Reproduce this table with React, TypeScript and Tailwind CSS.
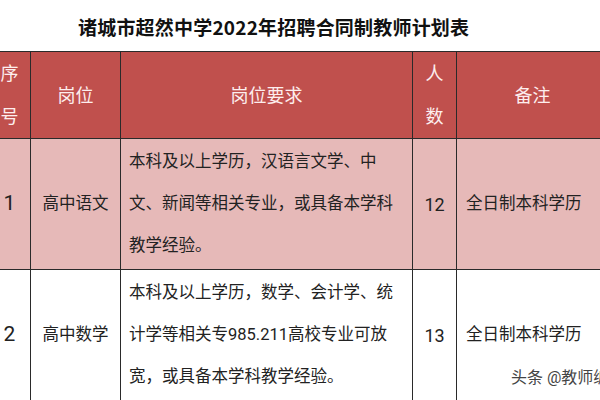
import React from "react";

const body = "font-['Roboto','Noto_Sans_CJK_SC',sans-serif]";

export default function App() {
  const cell = "border-r border-b border-[#2a2a2a]";
  return (
    <div className={`relative w-[600px] h-[400px] overflow-hidden bg-white ${body}`}>
      <div className="h-[51px] pl-[78px] flex items-center pt-[3px]">
        <span className="text-[19px] font-bold text-[#111] font-['Noto_Sans_CJK_SC',sans-serif] tracking-[0.2px]">
          诸城市超然中学2022年招聘合同制教师计划表
        </span>
      </div>
      <div className="-ml-[11px] w-[620px] border-t border-[#2a2a2a] grid grid-cols-[42px_90px_292px_44px_152px]">
        {/* header */}
        <div className={`${cell} bg-[#c0504d] h-[87px] flex flex-col items-center justify-center text-[18px] leading-[43px] text-[#fdeeee]`}>
          <span>序</span>
          <span>号</span>
        </div>
        <div className={`${cell} bg-[#c0504d] flex items-center justify-center text-[18px] text-[#fdeeee]`}>岗位</div>
        <div className={`${cell} bg-[#c0504d] flex items-center justify-center text-[18px] text-[#fdeeee]`}>岗位要求</div>
        <div className={`${cell} bg-[#c0504d] flex flex-col items-center justify-center text-[18px] leading-[43px] text-[#fdeeee]`}>
          <span>人</span>
          <span>数</span>
        </div>
        <div className={`${cell} bg-[#c0504d] flex items-center justify-center text-[18px] text-[#fdeeee]`}>备注</div>

        {/* row 1 */}
        <div className={`${cell} bg-[#e6b9b8] h-[131px] flex items-center justify-center text-[21px] text-[#222]`}>1</div>
        <div className={`${cell} bg-[#e6b9b8] flex items-center justify-center text-[16.5px] text-[#222]`}>高中语文</div>
        <div className={`${cell} bg-[#e6b9b8] flex flex-col justify-center pl-[8px] text-[16.5px] leading-[42px] text-[#222] whitespace-nowrap`}>
          <span>本科及以上学历，汉语言文学、中</span>
          <span>文、新闻等相关专业，或具备本学科</span>
          <span>教学经验。</span>
        </div>
        <div className={`${cell} bg-[#e6b9b8] flex items-center justify-center text-[18px] text-[#222]`}>12</div>
        <div className={`${cell} bg-[#e6b9b8] flex items-center pl-[9px] text-[16.5px] text-[#222]`}>全日制本科学历</div>

        {/* row 2 */}
        <div className={`${cell} bg-white h-[131px] flex items-center justify-center text-[21px] text-[#222]`}>2</div>
        <div className={`${cell} bg-white flex items-center justify-center text-[16.5px] text-[#222]`}>高中数学</div>
        <div className={`${cell} bg-white flex flex-col justify-center pl-[8px] text-[16.5px] leading-[42px] text-[#222] whitespace-nowrap`}>
          <span>本科及以上学历，数学、会计学、统</span>
          <span>计学等相关专985.211高校专业可放</span>
          <span>宽，或具备本学科教学经验。</span>
        </div>
        <div className={`${cell} bg-white flex items-center justify-center text-[18px] text-[#222]`}>13</div>
        <div className={`${cell} bg-white flex items-center pl-[9px] text-[16.5px] text-[#222]`}>全日制本科学历</div>
      </div>
      <div className="absolute left-[511px] top-[366px] text-[16px] text-[#444] whitespace-nowrap [text-shadow:0_0_2px_#fff,0_0_2px_#fff]">
        头条 @教师编
      </div>
    </div>
  );
}
